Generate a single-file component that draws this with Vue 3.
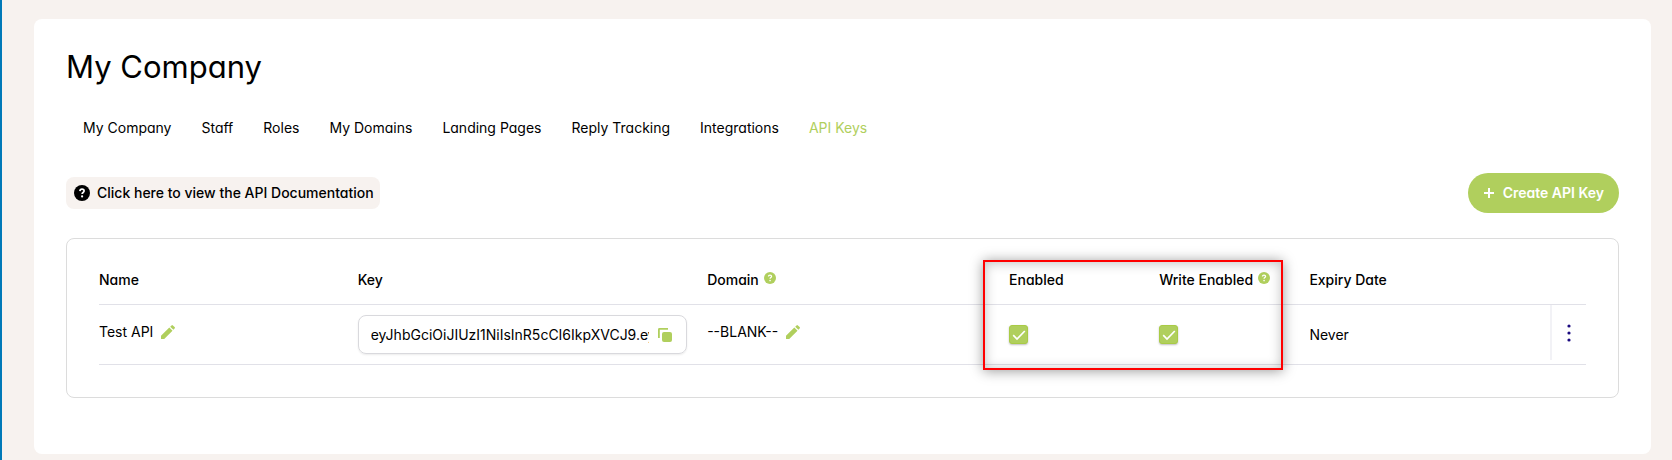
<script setup>
import { ref } from 'vue'

const tabs = ['My Company', 'Staff', 'Roles', 'My Domains', 'Landing Pages', 'Reply Tracking', 'Integrations', 'API Keys']
const activeTab = ref('API Keys')

const keys = ref([
  {
    name: 'Test API',
    key: 'eyJhbGciOiJIUzI1NiIsInR5cCI6IkpXVCJ9.eyJhY2NvdW50IjoxfQ',
    domain: '--BLANK--',
    enabled: true,
    write: true,
    expiry: 'Never',
  },
])
</script>

<template>
  <div class="page">
    <main class="card">
      <h1>My Company</h1>

      <nav class="tabs" aria-label="Company sections">
        <a
          v-for="tab in tabs"
          :key="tab"
          href="#"
          :class="{ active: tab === activeTab }"
          @click.prevent="activeTab = tab"
        >{{ tab }}</a>
      </nav>

      <div class="actions">
        <a href="#" class="docs">
          <svg width="16" height="16" viewBox="0 0 16 16" aria-hidden="true">
            <circle cx="8" cy="8" r="8" fill="#000" />
            <path d="M5.9 6.1c.1-1.3.9-1.9 2.1-1.9s2.1.7 2.1 1.8c0 1.5-2 1.4-2 3" fill="none" stroke="#fff" stroke-width="1.7" />
            <circle cx="8.1" cy="11.4" r="1.1" fill="#fff" />
          </svg>
          Click here to view the API Documentation
        </a>
        <button type="button" class="create">
          <svg width="10" height="10" viewBox="0 0 10 10" aria-hidden="true">
            <path d="M5 0v10M0 5h10" stroke="#fff" stroke-width="2" />
          </svg>
          Create API Key
        </button>
      </div>

      <section class="panel">
        <div class="table-wrap">
          <table>
            <colgroup>
              <col class="c-name"><col class="c-key"><col class="c-domain">
              <col class="c-flag"><col class="c-flag"><col><col class="c-menu">
            </colgroup>
            <thead>
              <tr>
                <th scope="col">Name</th>
                <th scope="col">Key</th>
                <th scope="col">
                  <span class="hinted">Domain
                    <svg class="hint" width="12" height="12" viewBox="0 0 16 16" aria-hidden="true">
                      <circle cx="8" cy="8" r="8" fill="#b0cf5d" />
                      <path d="M5.9 6.1c.1-1.3.9-1.9 2.1-1.9s2.1.7 2.1 1.8c0 1.5-2 1.4-2 3" fill="none" stroke="#fff" stroke-width="1.7" />
                      <circle cx="8.1" cy="11.4" r="1.1" fill="#fff" />
                    </svg>
                  </span>
                </th>
                <th scope="col">Enabled</th>
                <th scope="col">
                  <span class="hinted">Write Enabled
                    <svg class="hint" width="12" height="12" viewBox="0 0 16 16" aria-hidden="true">
                      <circle cx="8" cy="8" r="8" fill="#b0cf5d" />
                      <path d="M5.9 6.1c.1-1.3.9-1.9 2.1-1.9s2.1.7 2.1 1.8c0 1.5-2 1.4-2 3" fill="none" stroke="#fff" stroke-width="1.7" />
                      <circle cx="8.1" cy="11.4" r="1.1" fill="#fff" />
                    </svg>
                  </span>
                </th>
                <th scope="col">Expiry Date</th>
                <td></td>
              </tr>
            </thead>
            <tbody>
              <tr v-for="item in keys" :key="item.name">
                <td>
                  <div class="editable">
                    {{ item.name }}
                    <button type="button" class="icon" aria-label="Edit name">
                      <svg width="14" height="14" viewBox="0 0 14 14" aria-hidden="true">
                        <path d="M0 14v-3.2L8.3 2.5l3.2 3.2L3.2 14zM9.2 1.7l1.3-1.3q.7-.7 1.4 0l1.7 1.7q.7.7 0 1.4l-1.2 1.3z" fill="#b0cf5d" />
                      </svg>
                    </button>
                  </div>
                </td>
                <td>
                  <div class="keybox">
                    <input type="text" readonly :value="item.key" aria-label="Key">
                    <button type="button" class="icon" aria-label="Copy key">
                      <svg width="14" height="14" viewBox="0 0 14 14" aria-hidden="true">
                        <path d="M0 10V1.4Q0 0 1.4 0H10v1.8H1.8V10z" fill="#b0cf5d" />
                        <rect x="4" y="4" width="10" height="10" rx="2" fill="#b0cf5d" />
                      </svg>
                    </button>
                  </div>
                </td>
                <td>
                  <div class="editable">
                    {{ item.domain }}
                    <button type="button" class="icon" aria-label="Edit domain">
                      <svg width="14" height="14" viewBox="0 0 14 14" aria-hidden="true">
                        <path d="M0 14v-3.2L8.3 2.5l3.2 3.2L3.2 14zM9.2 1.7l1.3-1.3q.7-.7 1.4 0l1.7 1.7q.7.7 0 1.4l-1.2 1.3z" fill="#b0cf5d" />
                      </svg>
                    </button>
                  </div>
                </td>
                <td>
                  <label class="check">
                    <input v-model="item.enabled" type="checkbox" aria-label="Enabled">
                    <svg width="14" height="14" viewBox="0 0 14 14" aria-hidden="true">
                      <path d="M1.2 7.2l3.8 3.8 7.8-8" fill="none" stroke="#fff" stroke-width="1.7" />
                    </svg>
                  </label>
                </td>
                <td>
                  <label class="check">
                    <input v-model="item.write" type="checkbox" aria-label="Write Enabled">
                    <svg width="14" height="14" viewBox="0 0 14 14" aria-hidden="true">
                      <path d="M1.2 7.2l3.8 3.8 7.8-8" fill="none" stroke="#fff" stroke-width="1.7" />
                    </svg>
                  </label>
                </td>
                <td>{{ item.expiry }}</td>
                <td class="menu-cell">
                  <button type="button" class="menu" aria-label="More actions">
                    <svg width="4" height="18" viewBox="0 0 4 18" aria-hidden="true">
                      <circle cx="2" cy="2" r="1.6" fill="#1b0a80" />
                      <circle cx="2" cy="9" r="1.6" fill="#1b0a80" />
                      <circle cx="2" cy="16" r="1.6" fill="#1b0a80" />
                    </svg>
                  </button>
                </td>
              </tr>
            </tbody>
          </table>
          <div class="highlight"></div>
        </div>
      </section>
    </main>
  </div>
</template>

<style>
body {
  background: #f7f2ef;
}
</style>

<style scoped>
.page {
  box-sizing: border-box;
  min-height: 100vh;
  padding: 19px 21px 6px 32px;
  border-left: 2px solid #0079b8;
  background: #f7f2ef;
  color: #000;
  font-family: Inter, "Liberation Sans", sans-serif;
  font-size: 14px;
  line-height: 20px;
  font-feature-settings: "cv11";
}

.page *,
.page *::before {
  box-sizing: border-box;
}

.card {
  padding: 28px 32px 56px;
  border-radius: 8px;
  background: #fff;
}

h1 {
  margin: 0;
  font-size: 31px;
  line-height: 40px;
  font-weight: 400;
}

.tabs {
  display: flex;
  gap: 30px;
  margin-top: 31px;
  padding-left: 17px;
}

.tabs a {
  color: #000;
  text-decoration: none;
}

.tabs a.active {
  color: #b0cf5d;
}

.actions {
  display: flex;
  align-items: center;
  justify-content: space-between;
  margin-top: 35px;
}

.docs {
  display: flex;
  align-items: center;
  gap: 7px;
  padding: 6px 6px 6px 8px;
  border-radius: 8px;
  background: #f7f2ef;
  color: #000;
  font-weight: 500;
  text-decoration: none;
}

button {
  border: 0;
  padding: 0;
  background: none;
  font: inherit;
  font-feature-settings: inherit;
  cursor: pointer;
}

.create {
  display: flex;
  align-items: center;
  gap: 9px;
  padding: 10px 15px 10px 16px;
  border-radius: 20px;
  background: #b0cf5d;
  color: #fff;
  font-weight: 600;
}

.panel {
  margin-top: 25px;
  padding: 20px 32px 32px;
  border: 1px solid #dcdcdc;
  border-radius: 8px;
}

.table-wrap {
  position: relative;
}

table {
  width: 100%;
  table-layout: fixed;
  border-collapse: separate;
  border-spacing: 0;
}

.c-name { width: 17.4%; }
.c-key { width: 23.5%; }
.c-domain { width: 20.3%; }
.c-flag { width: 10.1%; }
.c-menu { width: 36px; }

th,
td {
  padding: 0;
  border-bottom: 1px solid #e1e1e8;
  text-align: left;
}

thead th {
  height: 46px;
  padding-bottom: 3px;
  font-weight: 500;
}

tbody td {
  height: 60px;
}

.hinted {
  display: flex;
  gap: 5px;
}

.hint {
  margin-top: 2px;
}

.editable {
  display: flex;
  align-items: center;
  gap: 8px;
  padding-bottom: 6px;
}

.icon svg,
.menu svg {
  display: block;
}

.keybox {
  display: flex;
  align-items: center;
  gap: 9px;
  height: 39px;
  margin-right: 20px;
  padding: 0 14px 0 12px;
  border: 1px solid #d9d9dd;
  border-radius: 8px;
  box-shadow: 0 1px 2px rgba(0, 0, 0, 0.08);
}

.keybox input {
  flex: 1;
  min-width: 0;
  height: 24px;
  padding: 0;
  border: 0;
  outline: 0;
  background: none;
  color: #000;
  font: inherit;
}

.check {
  display: grid;
  width: 19px;
  height: 19px;
}

.check input,
.check svg {
  grid-area: 1 / 1;
  place-self: center;
}

.check input {
  appearance: none;
  width: 19px;
  height: 19px;
  margin: 0;
  border: 1px solid #a9cb45;
  border-radius: 3px;
  box-shadow: 0 1px 2px rgba(0, 0, 0, 0.25);
}

.check input:checked {
  background: #b0cf5d;
}

.check svg {
  z-index: 1;
  pointer-events: none;
}

.menu-cell {
  vertical-align: top;
}

.menu {
  display: flex;
  align-items: center;
  justify-content: center;
  width: 100%;
  height: 55px;
  border-left: 2px solid #f2f2f6;
}

.highlight {
  position: absolute;
  top: 1px;
  left: 59.45%;
  width: 20.2%;
  height: 110px;
  border: 2px solid #f00;
  box-shadow: 0 1px 12px rgba(0, 0, 0, 0.4), inset 0 1px 12px rgba(0, 0, 0, 0.25);
  pointer-events: none;
}
</style>
